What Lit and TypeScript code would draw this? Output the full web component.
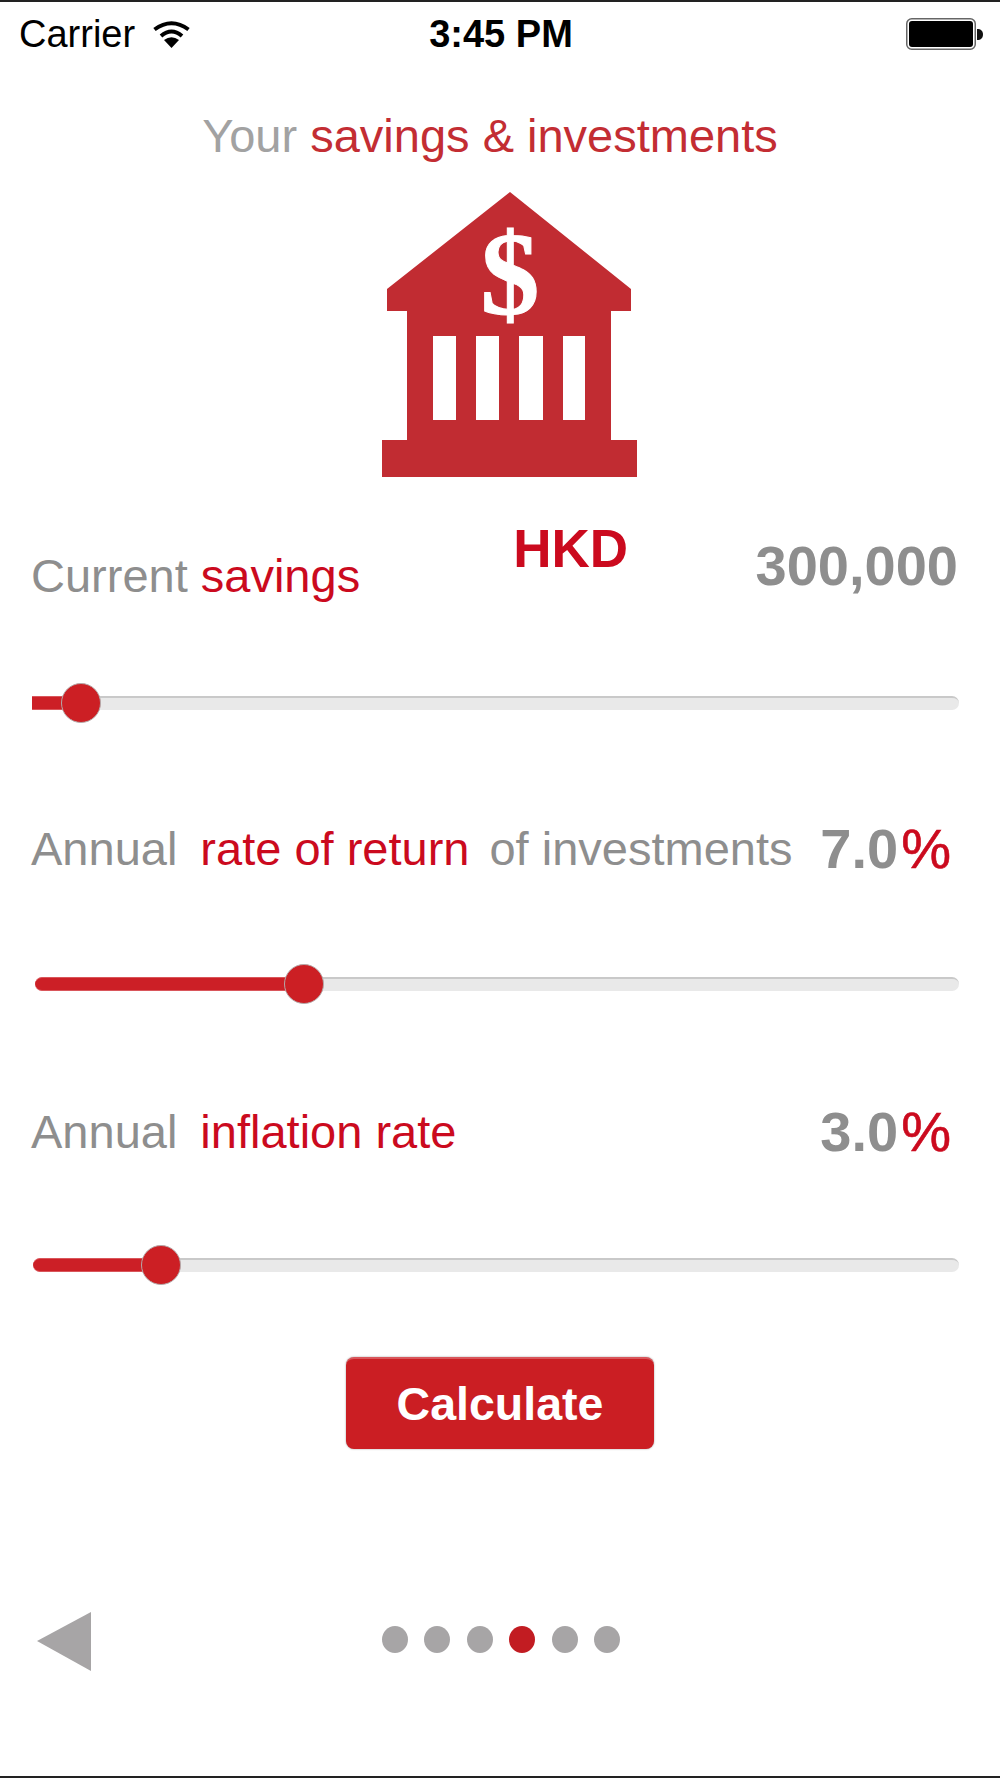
import { LitElement, html, css } from 'lit';
import { customElement } from 'lit/decorators.js';

@customElement('app-slider')
export class AppSlider extends LitElement {
  static properties = {
    fill: { type: Number },
    start: { type: Number },
    square: { type: Boolean }
  };

  declare fill: number;
  declare start: number;
  declare square: boolean;

  static styles = css`
    :host {
      display: block;
      width: 927px;
      height: 42px;
      position: relative;
    }
    .track {
      position: absolute;
      right: 0;
      top: 14px;
      height: 14px;
      box-sizing: border-box;
      background: #e9e9e9;
      border-top: 2px solid #c9c9c9;
      border-radius: 0 8px 8px 0;
    }
    .fill {
      position: absolute;
      top: 14px;
      height: 14px;
      background: #cc1f26;
      border-top: 1px solid #d9565b;
      border-bottom: 1px solid #d9565b;
      box-sizing: border-box;
      border-radius: 7px 0 0 7px;
    }
    .fill.square {
      border-radius: 0;
    }
    .thumb {
      position: absolute;
      top: 1px;
      width: 40px;
      height: 40px;
      box-sizing: border-box;
      margin-left: -20px;
      border-radius: 50%;
      background: #cc1f24;
      border: 1px solid #b5a9a9;
    }
  `;

  render() {
    return html`
      <div class="track" style="left:${this.fill}px"></div>
      <div class="fill ${this.square ? 'square' : ''}" style="left:${this.start}px;width:${this.fill - this.start}px"></div>
      <div class="thumb" style="left:${this.fill}px"></div>
    `;
  }
}

@customElement('app-root')
export class AppRoot extends LitElement {
  static styles = css`
    :host {
      display: block;
      width: 1000px;
      height: 1778px;
      box-sizing: border-box;
      background: #fff;
      border-top: 2px solid #222;
      border-bottom: 2px solid #222;
      font-family: "Liberation Sans", Arial, sans-serif;
      color: #8e8e8e;
      overflow: hidden;
    }
    .status {
      display: grid;
      grid-template-columns: 1fr auto 1fr;
      align-items: center;
      height: 62px;
      padding: 2px 17px 0 19px;
      box-sizing: border-box;
      color: #000;
      font-size: 38px;
    }
    .status-left {
      display: flex;
      align-items: center;
      gap: 17px;
    }
    .status-right {
      display: flex;
      justify-content: flex-end;
    }
    .time {
      font-weight: bold;
      font-size: 38px;
    }
    .title {
      margin-top: 46px;
      padding-right: 20px;
      text-align: center;
      font-size: 47px;
      line-height: 52px;
      color: #a2a2a2;
    }
    .title b {
      font-weight: normal;
      color: #c32d33;
    }
    .bank {
      display: block;
      margin: 29px 0 0 382px;
    }
    .row {
      display: flex;
      align-items: flex-end;
      padding: 0 49px 0 31px;
      font-size: 47px;
      line-height: 52px;
      gap: 23px;
    }
    .row-one {
      margin-top: 46px;
      padding-right: 42px;
      gap: 0;
    }
    .row-two {
      margin-top: 99px;
    }
    .row-three {
      margin-top: 101px;
    }
    .red {
      color: #cb0a1e;
    }
    .tail {
      margin-left: -3px;
    }
    .hkd {
      margin: 0 0 27px 153px;
      font-weight: bold;
      font-size: 53px;
      color: #cb0a1e;
    }
    .value {
      margin-left: auto;
      font-weight: bold;
      font-size: 56px;
      white-space: nowrap;
    }
    .row-one .value {
      margin-bottom: 10px;
    }
    .value span {
      margin-left: 3px;
      color: #cb0a1e;
      font-weight: normal;
      -webkit-text-stroke: 0.6px #cb0a1e;
    }
    app-slider {
      margin-left: 32px;
    }
    .slider-one {
      margin-top: 80px;
    }
    .slider-two {
      margin-top: 88px;
    }
    .slider-three {
      margin-top: 86px;
    }
    .calc {
      display: block;
      width: 308px;
      height: 92px;
      margin: 71px 0 0 346px;
      padding: 0;
      border: none;
      border-top: 2px solid #d9565b;
      border-radius: 8px;
      box-shadow: 0 0 2px #9a9a9a;
      background: #cb1e23;
      color: #fff;
      font-family: inherit;
      font-size: 46.5px;
      font-weight: bold;
    }
    .pager {
      display: flex;
      align-items: center;
      margin-top: 163px;
      padding-left: 37px;
    }
    .dots {
      display: flex;
      gap: 16.4px;
      margin: 0 0 4px 291px;
    }
    .dot {
      width: 26px;
      height: 27px;
      border-radius: 50%;
      background: #a7a5a6;
    }
    .dot.on {
      background: #c21c22;
    }
  `;

  render() {
    return html`
      <div class="status">
        <div class="status-left">
          <span>Carrier</span>
          <svg width="39" height="28" viewBox="0 0 39 28">
            <path d="M2.5 9.5 Q19.5 -3 36.5 9.5" fill="none" stroke="#000" stroke-width="4"/>
            <path d="M9 16 Q19.5 7 30 16" fill="none" stroke="#000" stroke-width="4"/>
            <path d="M19.5 28 L12 20 Q19.5 14.5 27 20 Z" fill="#000"/>
          </svg>
        </div>
        <span class="time">3:45 PM</span>
        <div class="status-right">
          <svg width="77" height="32" viewBox="0 0 77 32">
            <rect x="0.75" y="0.75" width="68.5" height="30.5" rx="5" fill="#fff" stroke="#666" stroke-width="1.5"/>
            <rect x="3" y="3" width="64" height="26" rx="3" fill="#000"/>
            <path d="M71 11 C75 11 77 13 77 16.5 C77 20 75 22 71 22 Z" fill="#111"/>
          </svg>
        </div>
      </div>

      <div class="title">Your <b>savings &amp; investments</b></div>

      <svg class="bank" width="256" height="286" viewBox="382 190 256 286">
        <path fill="#c12c32" d="M510 191 L631 288 V310 H611 V439 H637 V476 H382 V439 H407 V310 H387 V288 Z"/>
        <g fill="#fff">
          <rect x="433" y="335" width="23" height="84"/>
          <rect x="476" y="335" width="23" height="84"/>
          <rect x="519" y="335" width="24" height="84"/>
          <rect x="563" y="335" width="22" height="84"/>
          <text x="510" y="313" text-anchor="middle" font-family="Liberation Serif" font-weight="bold" font-size="118" stroke="#fff" stroke-width="1">$</text>
        </g>
      </svg>

      <div class="row row-one">
        <span>Current <span class="red">savings</span></span>
        <span class="hkd">HKD</span>
        <span class="value">300,000</span>
      </div>
      <app-slider class="slider-one" .fill=${49} .start=${0} square></app-slider>

      <div class="row row-two">
        <span>Annual</span>
        <span class="red">rate of return</span>
        <span class="tail">of investments</span>
        <span class="value">7.0<span>%</span></span>
      </div>
      <app-slider class="slider-two" .fill=${272} .start=${3}></app-slider>

      <div class="row row-three">
        <span>Annual</span>
        <span class="red">inflation rate</span>
        <span class="value">3.0<span>%</span></span>
      </div>
      <app-slider class="slider-three" .fill=${129} .start=${1}></app-slider>

      <button class="calc">Calculate</button>

      <div class="pager">
        <svg width="54" height="59" viewBox="0 0 54 59"><path d="M0 29 L54 0 V59 Z" fill="#a7a5a6"/></svg>
        <div class="dots">
          <div class="dot"></div>
          <div class="dot"></div>
          <div class="dot"></div>
          <div class="dot on"></div>
          <div class="dot"></div>
          <div class="dot"></div>
        </div>
      </div>
    `;
  }
}
